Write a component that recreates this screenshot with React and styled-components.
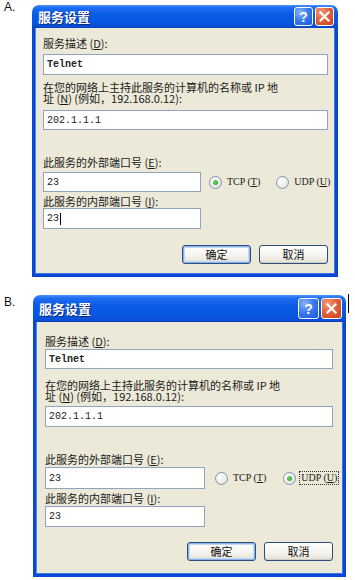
import React from "react";
import styled, { createGlobalStyle } from "styled-components";

const GlobalStyle = createGlobalStyle`
  html, body {
    margin: 0;
    padding: 0;
    background: #fff;
  }
  body {
    font-family: "Noto Sans CJK SC", "Liberation Sans", sans-serif;
  }
`;

const dialogs = [
  {
    letter: "A.",
    letterTop: -5,
    letterWidth: 32,
    width: 306,
    titleH: 23,
    capSize: 19,
    padL: 8,
    padR: 7,
    padTop: 9,
    padBottom: 10,
    tb1: [5, 21],
    label2: 7,
    tb2: [6, 20],
    label3: 26,
    tb3: [4, 20],
    portW: 158,
    label4: 3,
    tb4: [1, 21],
    buttons: 16,
    radioGap: 8,
    radioSpacing: 14,
    checked: "tcp",
    caret: true,
    mark: false,
  },
  {
    letter: "B.",
    letterTop: 0,
    letterWidth: 33,
    width: 313,
    titleH: 27,
    capSize: 21,
    padL: 9,
    padR: 10,
    padTop: 13,
    padBottom: 13,
    tb1: [2, 20],
    label2: 11,
    tb2: [4, 21],
    label3: 26,
    tb3: [2, 22],
    portW: 160,
    label4: 3,
    tb4: [2, 21],
    buttons: 15,
    radioGap: 10,
    radioSpacing: 15,
    checked: "udp",
    caret: false,
    mark: true,
  },
];

const App = () => {
  return (
    <Page>
      <GlobalStyle />
      {dialogs.map((d) => (
        <Option key={d.letter}>
          <Letter $top={d.letterTop} $w={d.letterWidth}>
            {d.letter}
          </Letter>
          <Frame $w={d.width}>
            <TitleBar $h={d.titleH}>
              <Title>服务设置</Title>
              <Captions>
                <CaptionButton $size={d.capSize}>?</CaptionButton>
                <CaptionButton $size={d.capSize} $close>
                  <svg width="11" height="11" viewBox="0 0 11 11">
                    <path
                      d="M1.5 1.5 L9.5 9.5 M9.5 1.5 L1.5 9.5"
                      stroke="#fff"
                      strokeWidth="2.2"
                      strokeLinecap="square"
                    />
                  </svg>
                </CaptionButton>
              </Captions>
            </TitleBar>
            <Body $pl={d.padL} $pr={d.padR} $pt={d.padTop} $pb={d.padBottom}>
              <Label>
                服务描述 (<u>D</u>):
              </Label>
              <TextBox $mt={d.tb1[0]} $h={d.tb1[1]} $bold>
                Telnet
              </TextBox>
              <Label $mt={d.label2} $lh={11}>
                在您的网络上主持此服务的计算机的名称或 IP 地
                <br />址 (<u>N</u>) (例如，192.168.0.12):
              </Label>
              <TextBox $mt={d.tb2[0]} $h={d.tb2[1]}>
                202.1.1.1
              </TextBox>
              <Label $mt={d.label3}>
                此服务的外部端口号 (<u>E</u>):
              </Label>
              <PortRow $mt={d.tb3[0]} $gap={d.radioGap}>
                <TextBox $h={d.tb3[1]} $w={d.portW}>
                  23
                </TextBox>
                <RadioGroup $gap={d.radioSpacing}>
                  <RadioItem>
                    <Radio $checked={d.checked === "tcp"} />
                    <RadioText>
                      TCP (<u>T</u>)
                    </RadioText>
                  </RadioItem>
                  <RadioItem>
                    <Radio $checked={d.checked === "udp"} />
                    <RadioText $focus={d.checked === "udp"}>
                      UDP (<u>U</u>)
                    </RadioText>
                  </RadioItem>
                </RadioGroup>
              </PortRow>
              <Label $mt={d.label4}>
                此服务的内部端口号 (<u>I</u>):
              </Label>
              <TextBox $mt={d.tb4[0]} $h={d.tb4[1]} $w={d.portW}>
                23
                {d.caret && <Caret />}
              </TextBox>
              <ButtonRow $mt={d.buttons}>
                <Button $default>确定</Button>
                <Button>取消</Button>
              </ButtonRow>
            </Body>
          </Frame>
          {d.mark && <EdgeMark />}
        </Option>
      ))}
    </Page>
  );
};

export default App;

const Page = styled.div`
  width: 355px;
  height: 580px;
  overflow: hidden;
  background: #fff;
  box-sizing: border-box;
  padding-top: 5px;
  display: flex;
  flex-direction: column;
  gap: 18px;
`;

const Option = styled.div`
  display: flex;
  align-items: flex-start;
`;

const Letter = styled.div`
  width: ${(p) => p.$w}px;
  flex-shrink: 0;
  box-sizing: border-box;
  padding-left: 4px;
  margin-top: ${(p) => p.$top}px;
  font: 12px/14px "Liberation Sans", Arial, sans-serif;
  color: #111;
`;

const Frame = styled.div`
  width: ${(p) => p.$w}px;
  flex-shrink: 0;
  border-radius: 7px 7px 0 0;
  overflow: hidden;
  display: flex;
  flex-direction: column;
`;

const TitleBar = styled.div`
  height: ${(p) => p.$h}px;
  box-sizing: border-box;
  padding: 0 4px 0 6px;
  display: flex;
  align-items: center;
  justify-content: space-between;
  background: linear-gradient(
    180deg,
    #4a93f8 0%,
    #1e6cf0 12%,
    #0a5be6 40%,
    #0757e2 75%,
    #0a4fd6 92%,
    #0840c0 100%
  );
`;

const Title = styled.div`
  color: #fff;
  font: bold 13px/16px "Noto Sans CJK SC", sans-serif;
  text-shadow: 1px 1px 0 #0b2a80;
`;

const Captions = styled.div`
  display: flex;
  gap: 2px;
`;

const CaptionButton = styled.div`
  width: ${(p) => p.$size}px;
  height: ${(p) => p.$size}px;
  box-sizing: border-box;
  border: 1px solid #fff;
  border-radius: 3px;
  display: flex;
  align-items: center;
  justify-content: center;
  color: #fff;
  font: bold 14px/1 "Liberation Sans", Arial, sans-serif;
  background: ${(p) =>
    p.$close
      ? "radial-gradient(circle at 30% 25%, #f59a7c 0%, #e2623d 45%, #c8411c 100%)"
      : "radial-gradient(circle at 30% 25%, #8ab6fb 0%, #3b7cf2 45%, #1b55d6 100%)"};
`;

const Body = styled.div`
  background: #ece9d8;
  border: 3px solid #0a47d2;
  border-top: none;
  box-shadow: inset 1px 0 0 #4d8df2, inset -1px 0 0 #3a78e6, inset 0 -1px 0 #3a78e6;
  padding: ${(p) => p.$pt}px ${(p) => p.$pr}px ${(p) => p.$pb}px
    ${(p) => p.$pl}px;
  display: flex;
  flex-direction: column;
`;

const Label = styled.div`
  margin-top: ${(p) => p.$mt || 0}px;
  font-size: 11px;
  line-height: ${(p) => p.$lh || 12}px;
  color: #1a1a1a;
  white-space: nowrap;

  u {
    text-decoration: underline;
  }
`;

const TextBox = styled.div`
  margin-top: ${(p) => p.$mt || 0}px;
  height: ${(p) => p.$h}px;
  width: ${(p) => (p.$w ? `${p.$w}px` : "auto")};
  box-sizing: border-box;
  flex-shrink: 0;
  border: 1px solid #8fa4bd;
  background: #fff;
  padding-left: 3px;
  display: flex;
  align-items: center;
  font-family: "Liberation Mono", "Courier New", monospace;
  font-size: 10px;
  font-weight: ${(p) => (p.$bold ? 700 : 400)};
  color: #222;
`;

const Caret = styled.span`
  display: inline-block;
  width: 1px;
  height: 12px;
  margin-left: 1px;
  background: #000;
`;

const PortRow = styled.div`
  margin-top: ${(p) => p.$mt}px;
  display: flex;
  align-items: center;
  gap: ${(p) => p.$gap}px;
`;

const RadioGroup = styled.div`
  display: flex;
  align-items: center;
  flex-shrink: 0;
  gap: ${(p) => p.$gap}px;
`;

const RadioItem = styled.div`
  display: flex;
  align-items: center;
  flex-shrink: 0;
  gap: 3px;
`;

const Radio = styled.span`
  width: 13px;
  height: 13px;
  flex-shrink: 0;
  box-sizing: border-box;
  border-radius: 50%;
  border: 1px solid #7c94b4;
  background: radial-gradient(circle at 35% 35%, #ffffff 0%, #f2f1ec 45%, #d8d6cc 100%);
  display: inline-flex;
  align-items: center;
  justify-content: center;

  &::after {
    content: "";
    width: 5px;
    height: 5px;
    border-radius: 50%;
    background: ${(p) =>
      p.$checked ? "radial-gradient(circle at 40% 40%, #6fd46f, #1f9a1f)" : "transparent"};
  }
`;

const RadioText = styled.span`
  font: 10px/12px "Liberation Serif", "Times New Roman", serif;
  color: #1a1a1a;
  white-space: nowrap;
  padding: 0 1px;
  border: 1px dotted ${(p) => (p.$focus ? "#333" : "transparent")};

  u {
    text-decoration: underline;
  }
`;

const ButtonRow = styled.div`
  margin-top: ${(p) => p.$mt}px;
  display: flex;
  justify-content: flex-end;
  gap: 8px;
`;

const Button = styled.div`
  width: 69px;
  height: 19px;
  box-sizing: border-box;
  border: 1px solid #2a4f7e;
  border-radius: 3px;
  background: linear-gradient(180deg, #ffffff 0%, #f5f4ee 55%, #e3e0d4 100%);
  box-shadow: ${(p) =>
    p.$default
      ? "inset 0 0 0 1px #8eb1e8, inset 0 0 0 2px #c3d8f7"
      : "inset 0 -1px 0 #d0ccbf"};
  display: flex;
  align-items: center;
  justify-content: center;
  font: 11px/1 "Noto Sans CJK SC", sans-serif;
  color: #111;
`;

const EdgeMark = styled.div`
  width: 1px;
  height: 19px;
  margin-left: 2px;
  margin-top: -1px;
  background: #000;
`;
